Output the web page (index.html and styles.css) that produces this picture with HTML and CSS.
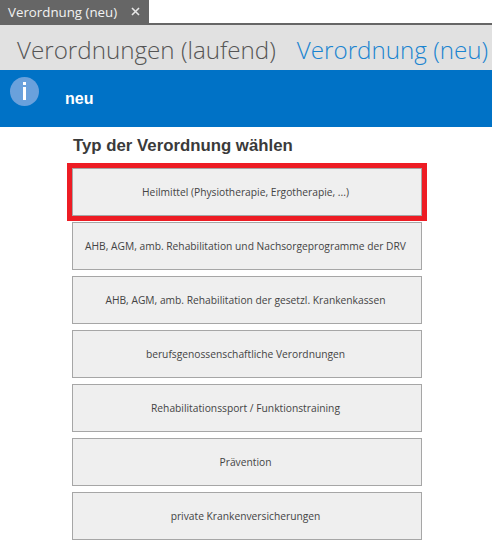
FILE: index.html
```html
<!DOCTYPE HTML>
<html lang="de">
  <head>
    <title>Verordnung (neu)</title>
    <meta charset="utf-8">
    <link rel="stylesheet" href="styles.css">
  </head>
  <body>

  <div class="tabbar">
    <div class="tab">
      <span class="tab-label">Verordnung (neu)</span>
      <svg class="tab-close" width="9" height="9" viewBox="0 0 9 9"><path d="M1 1L8 8M8 1L1 8" stroke="#e6e6e6" stroke-width="1.6" fill="none"/></svg>
    </div>
  </div>

  <div class="pivot">
    <span class="pivot-item">Verordnungen (laufend)</span>
    <span class="pivot-item active">Verordnung (neu)</span>
  </div>

  <div class="banner">
    <svg class="info-icon" width="29" height="29" viewBox="0 0 29 29">
      <circle cx="14.5" cy="14.5" r="14.5" fill="#6aa1dc"/>
      <rect x="13" y="5" width="3" height="3" fill="#fff"/>
      <rect x="13" y="10" width="3" height="13" fill="#fff"/>
    </svg>
    <span class="banner-title">neu</span>
  </div>

  <div class="content">
    <h1>Typ der Verordnung wählen</h1>
    <div class="choices">
      <div class="choice selected">Heilmittel (Physiotherapie, Ergotherapie, ...)</div>
      <div class="choice">AHB, AGM, amb. Rehabilitation und Nachsorgeprogramme der DRV</div>
      <div class="choice">AHB, AGM, amb. Rehabilitation der gesetzl. Krankenkassen</div>
      <div class="choice">berufsgenossenschaftliche Verordnungen</div>
      <div class="choice">Rehabilitationssport / Funktionstraining</div>
      <div class="choice">Prävention</div>
      <div class="choice">private Krankenversicherungen</div>
    </div>
  </div>

  </body>
</html>
```

FILE: styles.css
```css
html {
  height: 100%;
}
body {
  margin: 0;
  padding: 0;
  background: #ffffff;
  color: #333;
  font-family: "Open Sans", "Noto Sans", sans-serif;
  overflow: hidden;
}

.tabbar {
  height: 23px;
  border-bottom: 2px solid #666;
  display: flex;
}

.tab {
  width: 149px;
  height: 23px;
  box-sizing: border-box;
  padding: 0 0 0 8px;
  background-color: #666;
  color: #f2f2f2;
  font-size: 13.3px;
  line-height: 22px;
  display: flex;
  align-items: center;
}

.tab-label {
  width: 123px;
  white-space: nowrap;
}

.pivot {
  height: 45px;
  box-sizing: border-box;
  padding: 8px 0 0 17px;
  background-color: #e1e1e1;
  display: flex;
  gap: 21px;
  font-size: 24.2px;
  font-weight: 300;
  line-height: 34px;
  color: #555;
  white-space: nowrap;
}

.pivot-item.active {
  color: #1a84d0;
}

.banner {
  height: 57px;
  box-sizing: border-box;
  padding: 7px 0 0 10px;
  background-color: #0072c6;
  display: flex;
  align-items: flex-start;
}

.banner-title {
  margin: 13px 0 0 26px;
  color: #fff;
  font-family: "Liberation Sans", sans-serif;
  font-size: 16px;
  font-weight: bold;
  line-height: 18px;
}

.content {
  padding: 9px 0 0 72px;
}

h1 {
  margin: 0 0 12px 1px;
  font-family: "Liberation Sans", sans-serif;
  font-size: 16.8px;
  font-weight: bold;
  line-height: 20px;
  color: #3a3a3a;
}

.choices {
  width: 350px;
  display: flex;
  flex-direction: column;
  gap: 6px;
}

.choice {
  height: 48px;
  box-sizing: border-box;
  border: 1px solid #a6a6a6;
  background-color: #efefef;
  color: #444;
  font-size: 10.25px;
  line-height: 46px;
  padding-right: 3px;
  text-align: center;
  white-space: nowrap;
}

.choice.selected {
  outline: 5px solid #ed1c24;
  outline-offset: 0;
}
```
